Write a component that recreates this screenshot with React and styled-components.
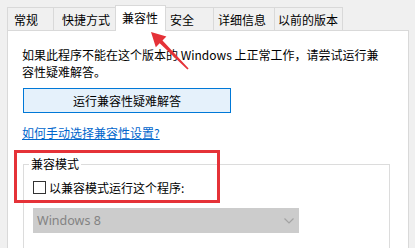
import React from "react";
import styled, { createGlobalStyle } from "styled-components";

const Global = createGlobalStyle`
  html, body {
    margin: 0;
    padding: 0;
    background: #f0f0f0;
    width: 415px;
    height: 248px;
    overflow: hidden;
  }
  body {
    font-family: "Noto Sans CJK SC", "Noto Sans", sans-serif;
    font-size: 12px;
    color: #000;
  }
  * { box-sizing: border-box; }
`;

const Page = styled.div`
  position: relative;
  width: 415px;
  height: 248px;
  overflow: hidden;
`;

const TabStrip = styled.div`
  display: flex;
  align-items: flex-end;
  height: 31px;
  margin-bottom: -1px;
  padding-left: 7px;
`;

const Tab = styled.div`
  display: flex;
  align-items: center;
  width: ${(p) => p.$w}px;
  padding-left: ${(p) => p.$pl}px;
  margin-left: ${(p) => p.$ml}px;
  margin-right: ${(p) => (p.$active ? -1 : 0)}px;
  height: ${(p) => (p.$active ? 26 : 23)}px;
  margin-bottom: ${(p) => (p.$active ? 0 : 1)}px;
  padding-bottom: ${(p) => (p.$active ? 2 : 0)}px;
  border: 1px solid #d9d9d9;
  border-bottom: none;
  background: ${(p) => (p.$active ? "#ffffff" : "#f0f0f0")};
  position: ${(p) => (p.$active ? "relative" : "static")};
  z-index: ${(p) => (p.$active ? 2 : "auto")};
  white-space: nowrap;
  font-size: 12px;
  line-height: 17px;
`;

const Panel = styled.div`
  margin-left: 7px;
  width: 402px;
  height: 240px;
  background: #ffffff;
  border: 1px solid #d9d9d9;
  padding: 15px 0 0 14px;
  display: flex;
  flex-direction: column;
  align-items: flex-start;
`;

const Desc = styled.p`
  margin: 0;
  font-size: 12px;
  line-height: 17px;
  white-space: nowrap;
`;

const Button = styled.div`
  margin-top: 8px;
  margin-left: 1px;
  width: 208px;
  height: 29px;
  border: 1px solid #0078d7;
  background: #e5f1fb;
  display: flex;
  align-items: center;
  justify-content: center;
  font-size: 12px;
`;

const Link = styled.a`
  margin-top: 11px;
  line-height: 17px;
  color: #0066cc;
  text-decoration: underline;
  font-size: 12px;
  cursor: pointer;
`;

const Group = styled.div`
  margin-top: 23px;
  margin-left: 1px;
  width: 367px;
  height: 120px;
  border: 1px solid #dcdcdc;
  border-bottom: none;
  padding-left: 9px;
  display: flex;
  flex-direction: column;
  align-items: flex-start;
`;

const GroupLabel = styled.div`
  margin-top: -10px;
  margin-left: -4px;
  padding: 0 2px;
  background: #ffffff;
  line-height: 17px;
  font-size: 12px;
`;

const CheckRow = styled.label`
  margin-top: 7px;
  display: flex;
  align-items: center;
  gap: 3px;
  line-height: 17px;
  font-size: 12px;
`;

const Box = styled.span`
  width: 13px;
  height: 13px;
  border: 1px solid #333333;
  background: #ffffff;
`;

const Select = styled.div`
  margin-top: 12px;
  width: 266px;
  height: 25px;
  background: #cccccc;
  padding: 0 5px 0 4px;
  display: flex;
  align-items: center;
  justify-content: space-between;
  color: #838383;
  font-family: "Noto Sans", sans-serif;
  font-size: 12.5px;
`;

const Annotation = styled.div`
  position: absolute;
  left: 14px;
  top: 150px;
  width: 206px;
  height: 53px;
  border: 3px solid #e53238;
  pointer-events: none;
`;

const ArrowSvg = styled.svg`
  position: absolute;
  left: 0;
  top: 0;
  pointer-events: none;
`;

const tabs = [
  { t: "常规", w: 47, pl: 6, ml: 0 },
  { t: "快捷方式", w: 65, pl: 8, ml: -1 },
  { t: "兼容性", w: 51, pl: 6, ml: -3, active: true },
  { t: "安全", w: 50, pl: 5, ml: -1 },
  { t: "详细信息", w: 62, pl: 4, ml: -1 },
  { t: "以前的版本", w: 69, pl: 3, ml: -1 },
];

export default function App() {
  return (
    <Page>
      <Global />
      <TabStrip>
        {tabs.map((tb) => (
          <Tab key={tb.t} $w={tb.w} $pl={tb.pl} $ml={tb.ml} $active={tb.active}>
            {tb.t}
          </Tab>
        ))}
      </TabStrip>
      <Panel>
        <Desc>
          如果此程序不能在这个版本的 Windows 上正常工作，请尝试运行兼
          <br />
          容性疑难解答。
        </Desc>
        <Button>运行兼容性疑难解答</Button>
        <Link>如何手动选择兼容性设置?</Link>
        <Group>
          <GroupLabel>兼容模式</GroupLabel>
          <CheckRow>
            <Box />
            以兼容模式运行这个程序:
          </CheckRow>
          <Select>
            <span>Windows 8</span>
            <svg width="10" height="6" viewBox="0 0 10 6">
              <path d="M0.5 0.5 L5 5 L9.5 0.5" fill="none" stroke="#a3a3a3" strokeWidth="1.2" />
            </svg>
          </Select>
        </Group>
      </Panel>
      <Annotation />
      <ArrowSvg width="415" height="248" viewBox="0 0 415 248">
        <polygon
          points="151,32 166.4,36.4 162.5,40.4 188.6,68.4 187.4,69.6 159.7,43.2 155.8,47.2"
          fill="#e53238"
        />
      </ArrowSvg>
    </Page>
  );
}
